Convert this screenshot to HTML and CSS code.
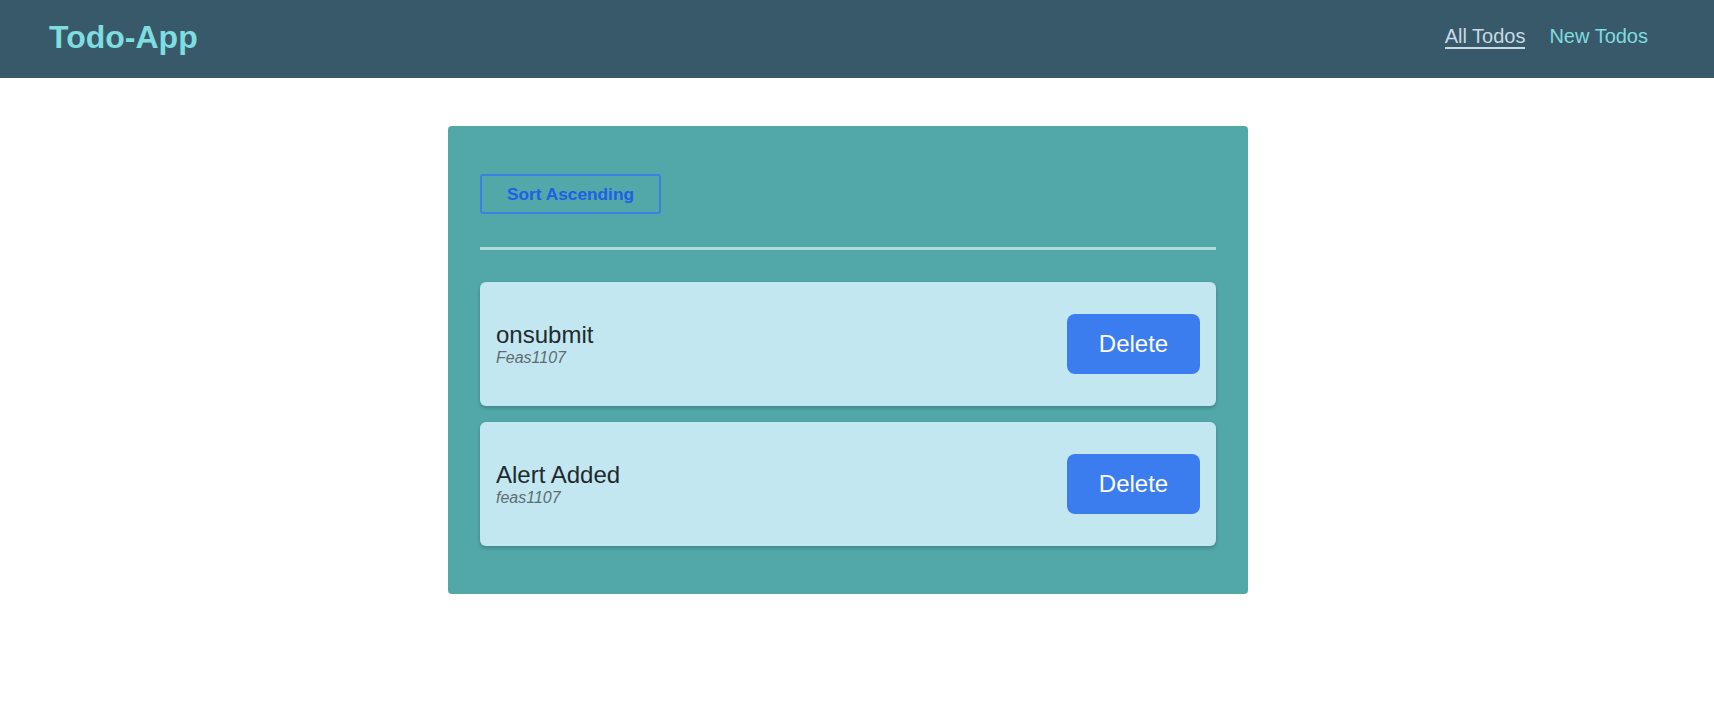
FILE: index.html
```html
<!DOCTYPE html>
<html lang="en">
<head>
<meta charset="utf-8">
<title>Todo-App</title>
<link rel="stylesheet" href="styles.css">
</head>
<body>
<header class="navbar">
  <h1 class="brand">Todo-App</h1>
  <nav class="nav-links">
    <a class="nav-link active" href="#">All Todos</a>
    <a class="nav-link" href="#">New Todos</a>
  </nav>
</header>
<main class="main">
  <section class="panel">
    <button class="sort-btn" type="button">Sort Ascending</button>
    <hr class="divider">
    <ul class="todo-list">
      <li class="todo">
        <div class="todo-text">
          <div class="todo-title">onsubmit</div>
          <div class="todo-user">Feas1107</div>
        </div>
        <button class="delete-btn" type="button">Delete</button>
      </li>
      <li class="todo">
        <div class="todo-text">
          <div class="todo-title">Alert Added</div>
          <div class="todo-user">feas1107</div>
        </div>
        <button class="delete-btn" type="button">Delete</button>
      </li>
    </ul>
  </section>
</main>
</body>
</html>
```
FILE: styles.css
```css
* { box-sizing: border-box; }
html, body { margin: 0; padding: 0; background: #ffffff; }
body { font-family: "Liberation Sans", Arial, sans-serif; color: #222; }

.navbar {
  height: 78px;
  background: #37596a;
  display: flex;
  align-items: center;
  justify-content: space-between;
  padding: 0 66px 0 49px;
}
.brand {
  margin: 0 0 4px;
  font-size: 32px;
  font-weight: 700;
  color: #7fdcdf;
  line-height: 1;
}
.nav-links { display: flex; gap: 24px; align-items: center; margin-bottom: 4px; }
.nav-link {
  font-size: 20px;
  color: #7fdcdf;
  text-decoration: none;
  padding-bottom: 0;
  border-bottom: 2px solid transparent;
  line-height: 1.1;
}
.nav-link.active {
  color: #c9d9e2;
  border-bottom-color: #c9d9e2;
}

.main {
  display: flex;
  justify-content: center;
  padding: 48px 18px 0 0;
}
.panel {
  width: 800px;
  background: #52a8a9;
  border-radius: 4px;
  padding: 48px 32px 32px;
}
.sort-btn {
  display: block;
  width: 181px;
  height: 40px;
  background: transparent;
  border: 2px solid #3b80e4;
  border-radius: 3px;
  color: #1d60e6;
  font-family: "Liberation Sans", Arial, sans-serif;
  font-weight: 700;
  font-size: 17.3px;
  padding: 0;
}
.divider {
  margin: 33px 0 32px;
  border: 0;
  height: 3px;
  background: #b1dadd;
}
.todo-list { list-style: none; margin: 0; padding: 0; }
.todo {
  display: flex;
  align-items: center;
  justify-content: space-between;
  background: #c2e7f0;
  border-radius: 6px;
  padding: 32px 16px;
  margin-bottom: 16px;
  box-shadow: 0 2px 4px rgba(0, 0, 0, 0.22);
}
.todo-title { font-size: 24px; line-height: 27px; color: #1f2a2e; }
.todo-user { font-size: 16px; font-style: italic; color: #5f6b70; line-height: 19px; }
.delete-btn {
  width: 133px;
  height: 60px;
  background: #3b7def;
  color: #ffffff;
  border: 0;
  border-radius: 8px;
  font-family: "Liberation Sans", Arial, sans-serif;
  font-size: 24px;
  padding: 0;
}
```
